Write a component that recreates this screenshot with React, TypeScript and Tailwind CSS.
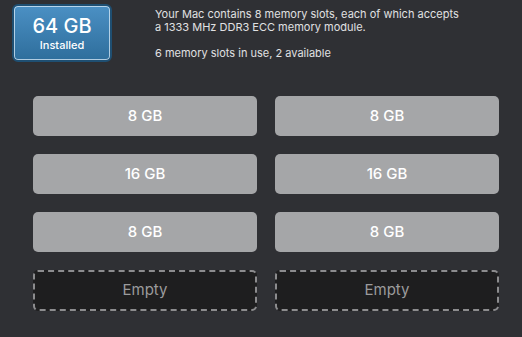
const SLOTS = ["8 GB", "8 GB", "16 GB", "16 GB", "8 GB", "8 GB", null, null];

function Slot({ size }: { size: string | null }) {
  if (!size) {
    return (
      <div className="h-[41px] rounded-[5px] border-2 border-dashed border-[#8c8c8e] bg-[#1e1e1f] flex items-center justify-center text-[15px] text-[#9b9b9c]">
        Empty
      </div>
    );
  }
  return (
    <div className="h-[40px] rounded-[5px] bg-[#a5a6a8] flex items-center justify-center text-[15px] font-medium text-white">
      {size}
    </div>
  );
}

export default function App() {
  return (
    <div className="w-[522px] h-[337px] overflow-hidden bg-[#2f3034] font-['Inter',sans-serif] antialiased">
      <div className="flex pt-[4px] pl-[12px]">
        {/* installed badge */}
        <div className="w-[100px] h-[58px] rounded-[6px] border-2 border-[#1f4f72] bg-gradient-to-b from-[#4b90c4] to-[#2e6e9c] shadow-[inset_0_0_0_1px_rgba(220,236,248,0.75)] flex flex-col items-center justify-center text-white">
          <div className="text-[20px] font-medium leading-[22px]">64 GB</div>
          <div className="mt-[2px] text-[11px] font-medium leading-[13px]">Installed</div>
        </div>
        <div className="ml-[43px] mt-[4px] text-[11px] leading-[13px] text-[#e0e0e2]">
          <p>
            Your Mac contains 8 memory slots, each of which accepts
            <br />a 1333 MHz DDR3 ECC memory module.
          </p>
          <p className="mt-[13px]">6 memory slots in use, 2 available</p>
        </div>
      </div>

      <div className="ml-[33px] mt-[34px] w-[466px] grid grid-cols-2 gap-x-[18px] gap-y-[18px]">
        {SLOTS.map((s, i) => (
          <Slot key={i} size={s} />
        ))}
      </div>
    </div>
  );
}
